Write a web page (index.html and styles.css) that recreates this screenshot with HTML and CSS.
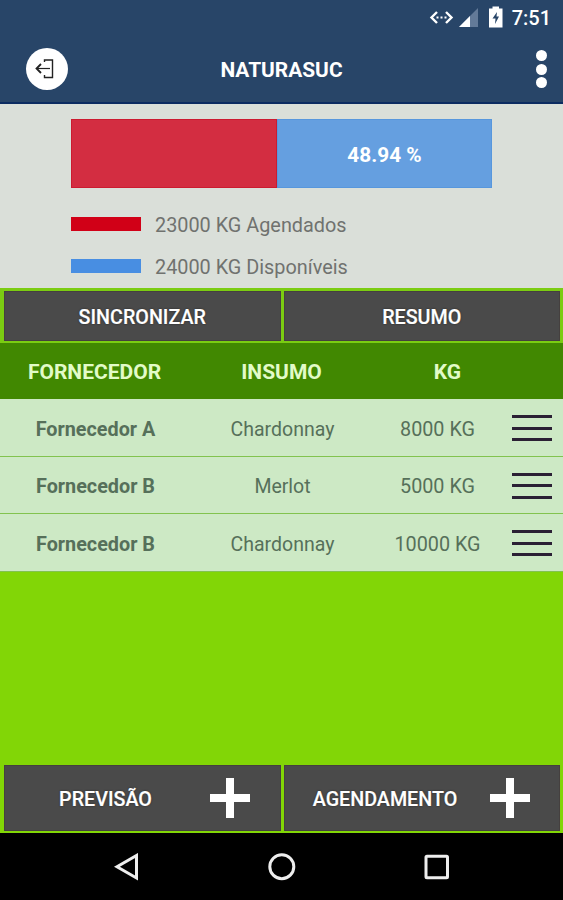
FILE: index.html
```html
<!DOCTYPE html>
<html lang="pt-BR">
<head>
<meta charset="utf-8">
<title>NATURASUC</title>
<link rel="stylesheet" href="styles.css">
</head>
<body>
<div class="screen">
  <header class="top">
    <div class="status">
      <svg class="status-icons" width="76" height="36" viewBox="0 0 76 36">
        <path d="M8 12 2.500 17.500 8 23M17 12l5.500 5.500L17 23" fill="none" stroke="#fff" stroke-width="2.400"/>
        <path d="M7.500 17.500h2M11.500 17.500h2M15.500 17.500h2" stroke="#fff" stroke-width="2"/>
        <path d="M49 8v19H30z" fill="#637a98"/>
        <path d="M41 16v11H30z" fill="#fff"/>
        <path d="M60 8.500h3.500v-2h6.500v2h3.500v19H60z" fill="#fff"/>
        <path d="M68 12l-4.500 6.500h3l-.5 5.500 4-7.500h-2.500z" fill="#284568"/>
      </svg>
      <span class="clock">7:51</span>
    </div>
    <div class="appbar">
      <span class="exit">
        <svg width="42" height="42" viewBox="0 0 42 42" fill="none" stroke="#222">
          <path d="M18.500 14v-2h8v17.500h-8V27" stroke-width="1.400"/>
          <path d="M24 20.500H11" stroke-width="1.200"/>
          <path d="M15 16l-4.500 4.500L15 25" stroke-width="1.800"/>
        </svg>
      </span>
      <h1 class="title">NATURASUC</h1>
      <span class="more"><i></i><i></i><i></i></span>
    </div>
  </header>
  <section class="summary">
    <div class="bar">
      <div class="used"></div>
      <div class="free">48.94 %</div>
    </div>
    <div class="legend"><i class="swatch red"></i><span>23000 KG Agendados</span></div>
    <div class="legend"><i class="swatch blue"></i><span>24000 KG Disponíveis</span></div>
  </section>
  <nav class="actions">
    <div class="btn"><span>SINCRONIZAR</span></div>
    <div class="btn"><span>RESUMO</span></div>
  </nav>
  <div class="row head"><span>FORNECEDOR</span><span>INSUMO</span><span>KG</span></div>
  <div class="row"><b>Fornecedor A</b><span>Chardonnay</span><span>8000 KG</span><i class="menu"></i></div>
  <div class="row"><b>Fornecedor B</b><span>Merlot</span><span>5000 KG</span><i class="menu"></i></div>
  <div class="row"><b>Fornecedor B</b><span>Chardonnay</span><span>10000 KG</span><i class="menu"></i></div>
  <nav class="actions bottom">
    <div class="btn add"><span>PREVISÃO</span><svg width="40" height="40" viewBox="0 0 40 40"><path d="M20 0v40M0 20h40" stroke="#fff" stroke-width="8"/></svg></div>
    <div class="btn add"><span>AGENDAMENTO</span><svg width="40" height="40" viewBox="0 0 40 40"><path d="M20 0v40M0 20h40" stroke="#fff" stroke-width="8"/></svg></div>
  </nav>
  <footer class="nav">
    <svg width="28" height="28" viewBox="0 0 28 28"><path d="M23.500 2.500v22.500L4 13.700z"/></svg>
    <svg width="28" height="28" viewBox="0 0 28 28"><circle cx="13.800" cy="13.700" r="12"/></svg>
    <svg width="28" height="28" viewBox="0 0 28 28"><rect x="3" y="3.200" width="21.500" height="21.500" rx="1"/></svg>
  </footer>
</div>
</body>
</html>
```
FILE: styles.css
```css
* { box-sizing: border-box; }
body { margin: 0; font-family: Roboto, "Liberation Sans", sans-serif; }
.screen { width: 563px; height: 900px; display: flex; flex-direction: column; background: #82d606; overflow: hidden; }
.top { height: 104px; flex: none; background: #284568; border-bottom: 2px solid #0c2c61; color: #fff; }
.status { height: 36px; display: flex; justify-content: flex-end; align-items: center; padding-right: 12px; }
.status-icons { width: 76px; height: 36px; margin-right: 7px; }
.clock { font-size: 20px; font-weight: 500; line-height: 36px; }
.appbar { height: 66px; display: grid; grid-template-columns: 68px 1fr 68px; align-items: center; }
.exit { width: 42px; height: 42px; margin-left: 26px; border-radius: 50%; background: #fff; }
.exit svg { display: block; }
.title { margin: 0; text-align: center; font-size: 20.900px; font-weight: 700; line-height: 24px; padding-top: 2px; }
.more { display: flex; flex-direction: column; gap: 2.500px; align-items: center; margin-left: 25px; }
.more i { width: 11px; height: 11px; border-radius: 50%; background: #fff; }
.summary { height: 184px; flex: none; background: #dadfd9; padding: 15px 71px 0; }
.bar { display: flex; height: 69px; width: 421px; margin-bottom: 22px; }
.used { width: 206px; background: #d32d41; border: 1px solid #cc1b30; }
.free { flex: 1; display: flex; align-items: center; justify-content: center; background: #659fe0; border: 1px solid #5797dd; color: #fff; font-size: 20.800px; font-weight: 700; padding-top: 3px; }
.legend { height: 28px; display: flex; align-items: center; gap: 14px; margin-bottom: 14px; color: #70726f; font-size: 19.850px; white-space: nowrap; }
.legend span { padding-top: 2px; }
.swatch { width: 70px; height: 14px; }
.red { background: #d10017; }
.blue { background: #488ee2; }
.actions { height: 55px; flex: none; display: flex; gap: 3px; padding: 2.500px 3px 2.500px 4px; background: #7bcc12; }
.btn { flex: 1; display: flex; align-items: center; justify-content: center; background: #4a4a4a; border: 1px solid #45403f; color: #fff; font-size: 19.700px; font-weight: 500; padding-top: 3px; -webkit-text-stroke: .2px #fff; text-shadow: 0 0 2px #222; }
.row { height: 57.500px; flex: none; display: grid; grid-template-columns: 190px 185px 125px 63px; align-items: center; text-align: center; background: #cde9c5; border-bottom: 1.500px solid #82c34f; color: #56705a; font-size: 19.800px; padding-top: 3px; }
.row span:nth-child(2) { font-size: 19.500px; }
.row b { font-weight: 700; padding-left: 1px; }
.row.head { height: 56.400px; padding-top: 2px; grid-template-columns: 189px 185px 147px; background: #418801; border: 0; color: #e2fbc8; font-size: 21px; font-weight: 700; }
.row.head span:nth-child(2) { font-size: 21px; }
.menu { width: 40px; height: 26px; margin-left: 12px; margin-top: -2px; border: solid #2b2034; border-width: 3px 0; background: linear-gradient(#2b2034, #2b2034) center / 100% 3px no-repeat; }
.bottom { height: 68px; margin-top: auto; padding-top: 0; background: #82d606; }
.add { display: grid; grid-template-columns: 205px 40px; justify-content: start; text-align: center; padding: 0; }
.add span { padding: 3px 4px 0 0; }
.add svg { display: block; }
.nav { height: 67px; flex: none; display: flex; justify-content: center; gap: 127px; align-items: center; background: #000; }
.nav svg { fill: none; stroke: #eee; stroke-width: 3; }
```
